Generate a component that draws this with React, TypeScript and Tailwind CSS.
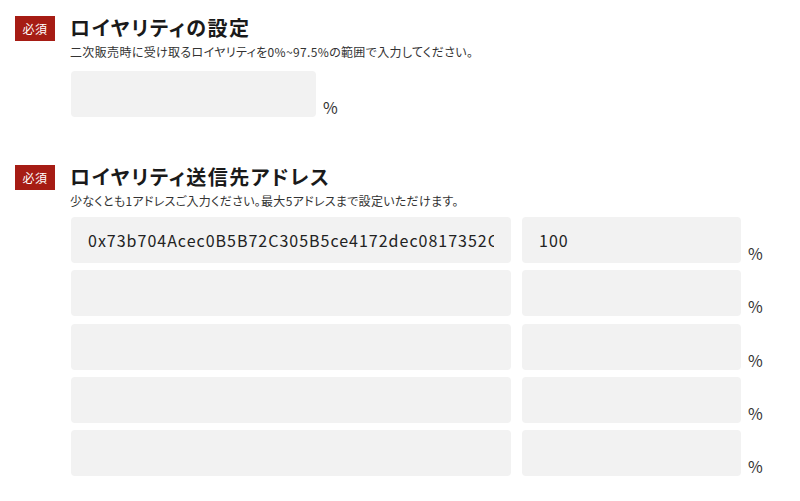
import React from 'react'

const font = { fontFamily: '"Noto Sans CJK JP", "Noto Sans", sans-serif' }

function Badge() {
  return (
    <span className="flex h-[25px] w-[40px] shrink-0 items-center justify-center bg-[#a61c14] text-[12px] leading-none tracking-[0.5px] text-white">
      必須
    </span>
  )
}

function Field({ value = '', className = '' }: { value?: string; className?: string }) {
  return (
    <input
      readOnly
      value={value}
      className={`h-[46px] rounded-[4px] bg-[#f2f2f2] px-[17px] text-[16px] tracking-[1px] text-[#222] outline-none ${className}`}
    />
  )
}

function Percent() {
  return <span className="ml-[7px] text-[16px] leading-[19px] text-[#333]">%</span>
}

const addresses = [
  { address: '0x73b704Acec0B5B72C305B5ce4172dec0817352C0', rate: '100' },
  { address: '', rate: '' },
  { address: '', rate: '' },
  { address: '', rate: '' },
  { address: '', rate: '' },
]

export default function App() {
  return (
    <div className="min-h-[501px] w-[800px] bg-white pl-[15px] pt-[16px] [font-feature-settings:'palt']" style={font}>
      {/* ロイヤリティの設定 */}
      <section className="flex gap-[16px]">
        <Badge />
        <div className="-mt-[2px] flex flex-col">
          <h2 className="-ml-[1px] text-[20px] font-bold leading-[28px] tracking-[1.5px] text-[#1a1a1a]">ロイヤリティの設定</h2>
          <p className="-ml-[1px] mt-[1px] text-[12px] leading-[18px] tracking-[0.35px] text-[#333]">
            二次販売時に受け取るロイヤリティを0%~97.5%の範囲で入力してください。
          </p>
          <div className="mt-[10px] flex items-end">
            <Field className="w-[245px]" />
            <Percent />
          </div>
        </div>
      </section>

      {/* ロイヤリティ送信先アドレス */}
      <section className="mt-[48px] flex gap-[16px]">
        <Badge />
        <div className="-mt-[2px] flex flex-col">
          <h2 className="-ml-[1px] text-[20px] font-bold leading-[28px] tracking-[1.5px] text-[#1a1a1a]">ロイヤリティ送信先アドレス</h2>
          <p className="-ml-[1px] mt-[1px] text-[12px] leading-[18px] tracking-[0.3px] text-[#333]">
            少なくとも1アドレスご入力ください。最大5アドレスまで設定いただけます。
          </p>
          <div className="mt-[7px] flex flex-col gap-[7.3px]">
            {addresses.map((row, i) => (
              <div key={i} className="flex items-end">
                <Field value={row.address} className="w-[440px]" />
                <Field value={row.rate} className="ml-[11px] w-[219px]" />
                <Percent />
              </div>
            ))}
          </div>
        </div>
      </section>
    </div>
  )
}
